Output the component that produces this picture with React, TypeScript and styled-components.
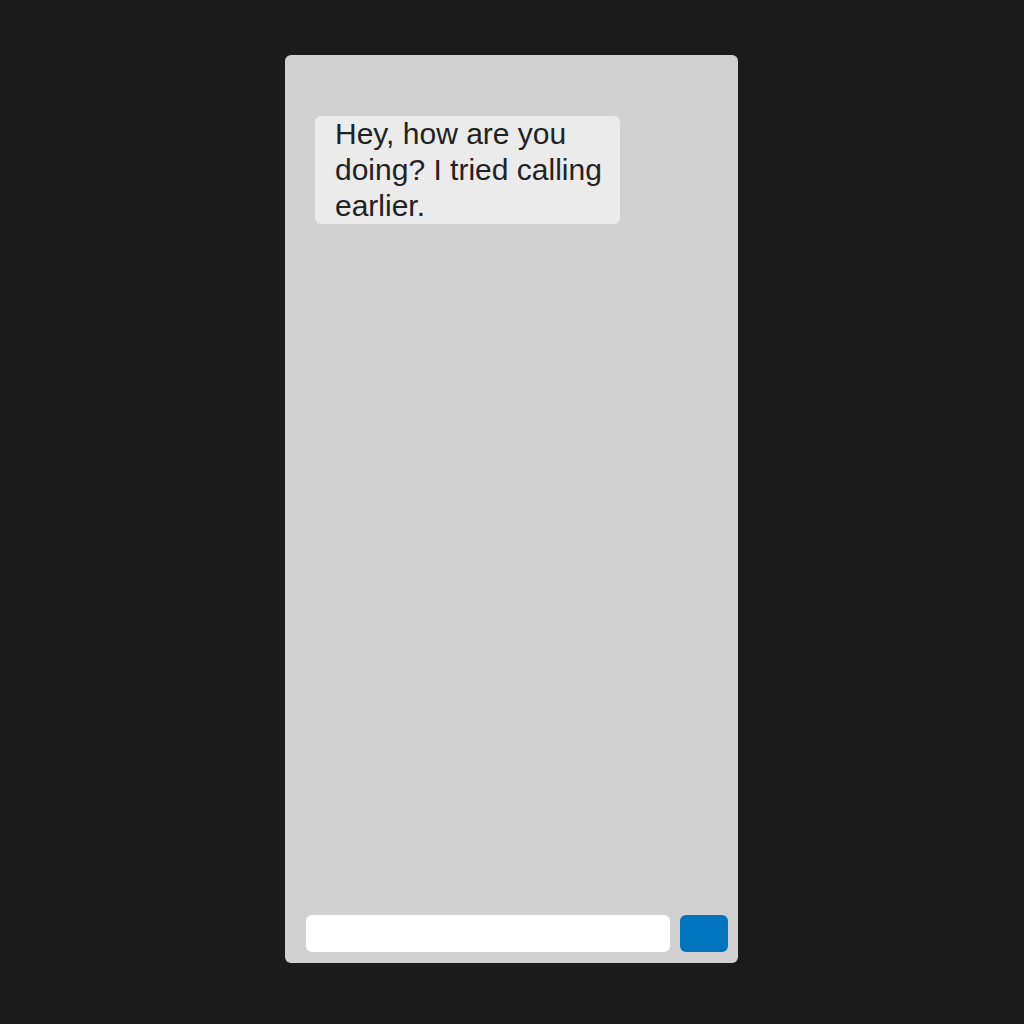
import styled, { createGlobalStyle } from "styled-components";

const GlobalStyle = createGlobalStyle`
  html, body {
    margin: 0;
    padding: 0;
    background: #1b1b1b;
    font-family: "Liberation Sans", Arial, sans-serif;
  }
  * {
    box-sizing: border-box;
  }
`;

const App = () => {
  return (
    <>
      <GlobalStyle />
      <Page>
        <Panel>
          <Messages>
            <Bubble>Hey, how are you doing? I tried calling earlier.</Bubble>
          </Messages>
          <Composer>
            <Input type="text" />
            <SendButton aria-label="Send" />
          </Composer>
        </Panel>
      </Page>
    </>
  );
};

export default App;

const Page = styled.div`
  width: 1024px;
  height: 1024px;
  display: flex;
  justify-content: center;
  padding-top: 55px;
`;

const Panel = styled.div`
  width: 453px;
  height: 908px;
  margin-left: -1px;
  background: #d1d1d1;
  border-radius: 6px;
  display: flex;
  flex-direction: column;
`;

const Messages = styled.div`
  flex: 1;
  padding: 61px 30px;
  display: flex;
  flex-direction: column;
  align-items: flex-start;
`;

const Bubble = styled.div`
  width: 305px;
  padding: 0 15px 0 20px;
  background: #ebebeb;
  color: #222222;
  border-radius: 6px;
  font-size: 30px;
  line-height: 36px;
`;

const Composer = styled.div`
  display: flex;
  gap: 10px;
  padding: 0 10px 11px 21px;
`;

const Input = styled.input`
  flex: 1;
  height: 37px;
  border: none;
  outline: none;
  border-radius: 6px;
  background: #ffffff;
  padding: 0 10px;
  font-family: inherit;
  font-size: 16px;
`;

const SendButton = styled.button`
  width: 48px;
  height: 37px;
  border: none;
  border-radius: 6px;
  background: #0074be;
  cursor: pointer;
`;
